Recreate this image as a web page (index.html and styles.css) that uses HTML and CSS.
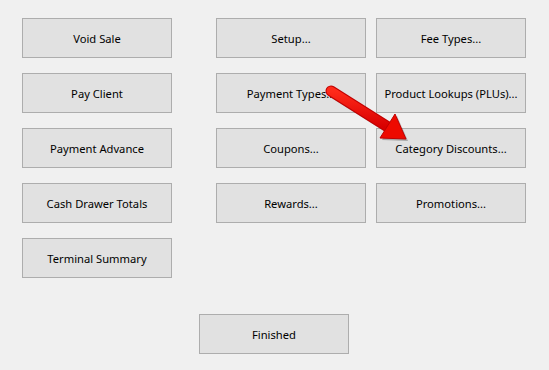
FILE: index.html
```html
<!DOCTYPE html>
<html lang="en">
<head>
    <meta charset="UTF-8">
    <meta name="viewport" content="width=device-width, initial-scale=1.0">
    <title>Functions</title>
    <link rel="stylesheet" href="styles.css">
</head>
<body>
    <div class="window">
        <div class="panel">
            <div class="left-column">
                <button class="btn">Void Sale</button>
                <button class="btn">Pay Client</button>
                <button class="btn">Payment Advance</button>
                <button class="btn">Cash Drawer Totals</button>
                <button class="btn">Terminal Summary</button>
            </div>
            <div class="right-grid">
                <button class="btn">Setup...</button>
                <button class="btn">Fee Types...</button>
                <button class="btn">Payment Types...</button>
                <button class="btn">Product Lookups (PLUs)...</button>
                <button class="btn">Coupons...</button>
                <button class="btn">Category Discounts...</button>
                <button class="btn">Rewards...</button>
                <button class="btn">Promotions...</button>
            </div>
        </div>
        <div class="footer">
            <button class="btn">Finished</button>
        </div>

        <!-- callout arrow drawn over the buttons -->
        <svg class="arrow" width="549" height="370" viewBox="0 0 549 370">
            <defs>
                <linearGradient id="red" x1="0" y1="0" x2="0" y2="1">
                    <stop offset="0" stop-color="#ff2a1a"/>
                    <stop offset="1" stop-color="#d80000"/>
                </linearGradient>
            </defs>
            <g transform="translate(2,2)" fill="#000" opacity="0.25">
                <line x1="331" y1="91" x2="388" y2="127" stroke="#000" stroke-width="10" stroke-linecap="round"/>
                <polygon points="380,138 395,114 406,139"/>
            </g>
            <line x1="331" y1="91" x2="388" y2="127" stroke="#c00000" stroke-width="11" stroke-linecap="round"/>
            <line x1="331" y1="91" x2="388" y2="127" stroke="url(#red)" stroke-width="9" stroke-linecap="round"/>
            <polygon points="380,138 395,114 406,139" fill="#ee0a00" stroke="#c00000" stroke-width="1" stroke-linejoin="round"/>
        </svg>
    </div>
</body>
</html>
```

FILE: styles.css
```css
body {
    margin: 0;
    background-color: #f0f0f0;
    font-family: 'Segoe UI', 'Noto Sans', sans-serif;
}
.window {
    position: relative;
    width: 549px;
    height: 370px;
    padding-top: 18px;
    box-sizing: border-box;
}
.panel {
    display: flex;
    gap: 44px;
    padding-left: 22px;
}
.left-column {
    display: flex;
    flex-direction: column;
    gap: 15px;
}
.right-grid {
    display: grid;
    grid-template-columns: 150px 150px;
    grid-auto-rows: 40px;
    column-gap: 10px;
    row-gap: 15px;
}
.btn {
    width: 150px;
    height: 40px;
    margin: 0;
    padding: 0;
    border: 1px solid #adadad;
    border-radius: 0;
    background-color: #e1e1e1;
    color: #000;
    font-family: 'Segoe UI', 'Noto Sans', sans-serif;
    font-size: 11.2px;
    cursor: pointer;
}
.btn:hover {
    background-color: #e5f1fb;
    border-color: #0078d7;
}
.footer {
    display: flex;
    justify-content: center;
    margin-top: 36px;
    padding-right: 1px;
}
.arrow {
    position: absolute;
    left: 0;
    top: 0;
    pointer-events: none;
}
```
